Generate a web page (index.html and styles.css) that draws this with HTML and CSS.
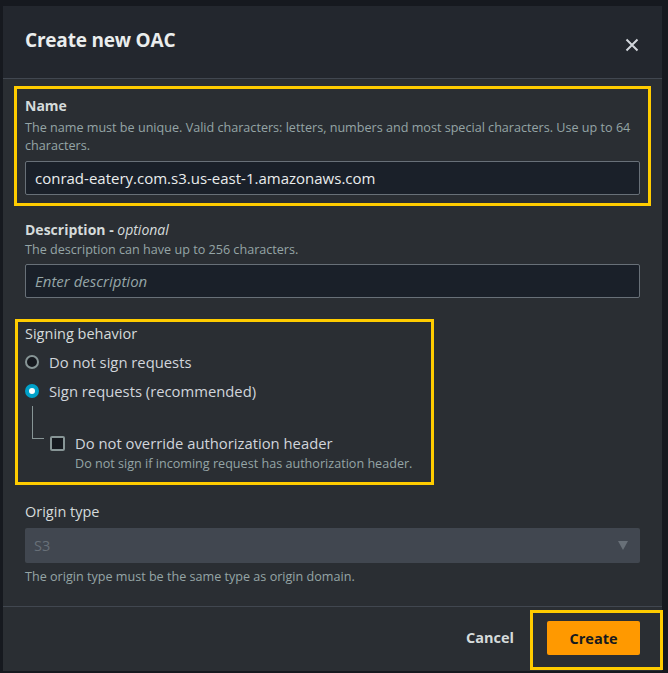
FILE: index.html
```html
<!DOCTYPE html>
<html lang="en">
<head>
<meta charset="utf-8">
<title>Create new OAC</title>
<link rel="stylesheet" href="styles.css">
</head>
<body>
<div class="modal">
  <header class="modal-header">
    <h2 class="modal-title">Create new OAC</h2>
    <button class="close" aria-label="Close">
      <svg width="16" height="16" viewBox="0 0 16 16"><path d="M2.5 2.5l11 11M13.5 2.5l-11 11" stroke="#d1d5db" stroke-width="2" fill="none"/></svg>
    </button>
  </header>
  <div class="modal-body">
    <section class="field hl hl-name">
      <div class="label">Name</div>
      <div class="desc">The name must be unique. Valid characters: letters, numbers and most special characters. Use up to 64 characters.</div>
      <div class="input">conrad-eatery.com.s3.us-east-1.amazonaws.com</div>
    </section>
    <section class="field plain desc-field">
      <div class="label">Description - <i>optional</i></div>
      <div class="desc">The description can have up to 256 characters.</div>
      <div class="input placeholder">Enter description</div>
    </section>
    <section class="field hl hl-sign">
      <div class="label light">Signing behavior</div>
      <div class="radio-row"><span class="radio"></span><span class="opt">Do not sign requests</span></div>
      <div class="radio-row"><span class="radio on"></span><span class="opt">Sign requests (recommended)</span></div>
      <div class="sub">
        <span class="tree"></span>
        <div class="check-row">
          <span class="check"></span>
          <div>
            <div class="opt">Do not override authorization header</div>
            <div class="desc">Do not sign if incoming request has authorization header.</div>
          </div>
        </div>
      </div>
    </section>
    <section class="field plain origin">
      <div class="label light">Origin type</div>
      <div class="select"><span>S3</span><span class="caret"></span></div>
      <div class="desc">The origin type must be the same type as origin domain.</div>
    </section>
  </div>
  <footer class="modal-footer">
    <button class="cancel">Cancel</button>
    <div class="hl-create"><button class="create">Create</button></div>
  </footer>
</div>
</body>
</html>
```
FILE: styles.css
```css
* { box-sizing: border-box; }
html, body { margin: 0; padding: 0; }
body {
  background: #16191f;
  font-family: "Open Sans", "Noto Sans", sans-serif;
  color: #d1d5db;
  width: 668px;
  height: 673px;
  overflow: hidden;
  padding: 6px 0 0 3px;
}
.modal {
  width: 659px;
  height: 665px;
  background: #2a2e33;
  display: flex;
  flex-direction: column;
}
.modal-header {
  height: 73px;
  background: #23272e;
  border-bottom: 1px solid #414750;
  display: flex;
  align-items: center;
  justify-content: space-between;
  padding: 0 22px 0 22px;
}
.modal-title {
  margin: 0;
  font-size: 19px;
  font-weight: 700;
  color: #eaeded;
  letter-spacing: -0.2px;
  position: relative;
  top: -2px;
}
.close {
  background: none;
  border: 0;
  padding: 0;
  width: 16px;
  height: 16px;
  display: flex;
  position: relative;
  top: 3px;
}
.modal-body {
  flex: 1;
  padding: 7px 11px 0 11px;
}
.field {
  border: 3px solid transparent;
  padding: 7px 8px 8px 8px;
}
.hl { border-color: #ffcc00; }
.label {
  font-size: 14px;
  font-weight: 700;
  line-height: 20px;
  color: #d5dbdb;
  margin-bottom: 3px;
}
.label.light { font-weight: 500; font-size: 14.5px; }
.label i { font-weight: 400; }
.desc {
  font-size: 12.6px;
  line-height: 18px;
  color: #95a5a6;
}
.input {
  margin-top: 6px;
  height: 34px;
  border: 1px solid #687078;
  border-radius: 2px;
  background: #1a2029;
  padding: 0 9px;
  display: flex;
  align-items: center;
  font-size: 15px;
  color: #eaeded;
}
.input.placeholder { font-style: italic; color: #95a5a6; font-size: 15px; margin-top: 5px; }
.desc-field { margin-top: 4px; padding-bottom: 8px; }
.desc-field .label { margin-bottom: 1px; }
.hl-sign {
  margin-top: 10px;
  width: 419px;
  margin-left: 1px;
  padding: 2px 8px 9px 7px;
}
.hl-sign .label { margin-bottom: 0; }
.radio-row {
  display: flex;
  align-items: center;
  height: 20px;
  margin-top: 8px;
}
.radio-row + .radio-row { margin-top: 9px; }
.radio {
  width: 14px;
  height: 14px;
  border-radius: 50%;
  border: 2px solid #879596;
  background: #16191f;
  margin-right: 10px;
  flex: none;
}
.radio.on {
  border: 4px solid #00a1c9;
  background: #fff;
}
.opt { font-size: 14.8px; line-height: 20px; color: #d1d5db; font-weight: 500; }
.sub {
  display: flex;
  margin-left: 7px;
}
.tree {
  width: 12px;
  height: 33px;
  border-left: 1px solid #879596;
  border-bottom: 1px solid #879596;
  margin-top: 5px;
  flex: none;
}
.check-row {
  display: flex;
  margin-top: 32px;
  margin-left: 6px;
}
.check {
  width: 15px;
  height: 15px;
  border: 2px solid #879596;
  border-radius: 2px;
  background: #16191f;
  margin: 3px 10px 0 0;
  flex: none;
}
.check-row .desc { margin-top: 2px; }
.origin { margin-top: 7px; padding-top: 7px; }
.origin .label { margin-bottom: 0; }
.select {
  margin-top: 6px;
  height: 35px;
  background: #414750;
  border-radius: 2px;
  display: flex;
  align-items: center;
  justify-content: space-between;
  padding: 0 12px 0 9px;
  font-size: 14.5px;
  color: #687078;
}
.caret {
  width: 0;
  height: 0;
  border-left: 5px solid transparent;
  border-right: 5px solid transparent;
  border-top: 9px solid #687078;
}
.origin .desc { margin-top: 5px; }
.modal-footer {
  height: 65px;
  border-top: 1px solid #414750;
  display: flex;
  align-items: flex-start;
  justify-content: flex-end;
}
.cancel {
  background: none;
  border: 0;
  font-family: inherit;
  font-size: 14.5px;
  font-weight: 700;
  color: #d5dbdb;
  margin-top: 21px;
  margin-right: 16px;
  padding: 0;
  line-height: 20px;
}
.hl-create {
  border: 3px solid #ffcc00;
  padding: 8px 20px 12px 14px;
  margin-top: 3px;
  margin-right: -1px;
}
.create {
  display: block;
  width: 93px;
  height: 34px;
  background: #ff9900;
  border: 0;
  border-radius: 2px;
  font-family: inherit;
  font-size: 14.5px;
  font-weight: 700;
  color: #16191f;
  padding: 0;
}
```
